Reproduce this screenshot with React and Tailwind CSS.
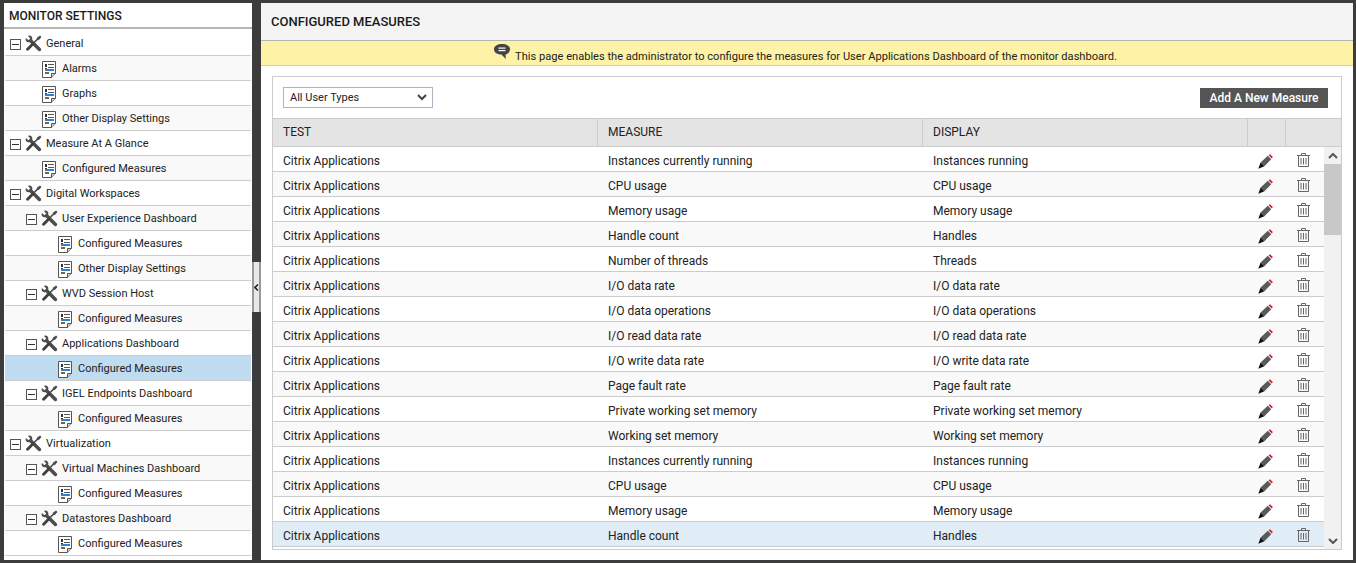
import React from 'react';

const tree = [
  ['General', 0, 'g'], ['Alarms', 1, 'd'], ['Graphs', 1, 'd'], ['Other Display Settings', 1, 'd'],
  ['Measure At A Glance', 0, 'g'], ['Configured Measures', 1, 'd'],
  ['Digital Workspaces', 0, 'g'], ['User Experience Dashboard', 1, 'g'], ['Configured Measures', 2, 'd'], ['Other Display Settings', 2, 'd'],
  ['WVD Session Host', 1, 'g'], ['Configured Measures', 2, 'd'],
  ['Applications Dashboard', 1, 'g'], ['Configured Measures', 2, 'd', true],
  ['IGEL Endpoints Dashboard', 1, 'g'], ['Configured Measures', 2, 'd'],
  ['Virtualization', 0, 'g'], ['Virtual Machines Dashboard', 1, 'g'], ['Configured Measures', 2, 'd'],
  ['Datastores Dashboard', 1, 'g'], ['Configured Measures', 2, 'd'],
];

const rows = [
  ['Instances currently running', 'Instances running'],
  ['CPU usage', 'CPU usage'],
  ['Memory usage', 'Memory usage'],
  ['Handle count', 'Handles'],
  ['Number of threads', 'Threads'],
  ['I/O data rate', 'I/O data rate'],
  ['I/O data operations', 'I/O data operations'],
  ['I/O read data rate', 'I/O read data rate'],
  ['I/O write data rate', 'I/O write data rate'],
  ['Page fault rate', 'Page fault rate'],
  ['Private working set memory', 'Private working set memory'],
  ['Working set memory', 'Working set memory'],
  ['Instances currently running', 'Instances running'],
  ['CPU usage', 'CPU usage'],
  ['Memory usage', 'Memory usage'],
  ['Handle count', 'Handles'],
];

const Tools = () => (
  <svg width="17" height="17" viewBox="0 0 18 18" className="shrink-0">
    {/* wrench, head top left */}
    <path d="M1 3.2 L3.6 5.6 L5.6 3.6 L3.2 1 C5.4 0 7.4 1 7.8 3.4 L7.6 5 L16.6 14 C17.4 15 17.2 16 16.6 16.6 C16 17.2 15 17.4 14 16.6 L5 7.6 L3.4 7.8 C1 7.4 0 5.4 1 3.2 Z" fill="#4d4d4d" />
    {/* screwdriver, handle bottom left */}
    <path d="M16 0.6 L17.4 2 L15 5 L13.6 5.2 L10 8.8 L8.8 7.6 L12.4 4 L12.8 2.6 Z" fill="#4d4d4d" />
    <path d="M8.2 7.4 L10.2 9.4 L4.4 15.6 C3.4 16.8 2.4 17 1.6 16.2 C0.8 15.4 1 14.4 2.2 13.4 Z" fill="#404040" />
  </svg>
);

const Doc = () => (
  <svg width="14" height="17" viewBox="0 0 14 17" className="shrink-0">
    <path d="M0.5 0.5 H13.5 V12.5 L9.5 16.5 H0.5 Z" fill="#fff" stroke="#555" />
    <path d="M13.5 12.5 H9.5 V16.5" fill="#ccc" stroke="#555" />
    <rect x="3" y="3" width="2" height="3" fill="#333" />
    <rect x="6" y="3" width="6" height="1" fill="#555" />
    <rect x="3" y="7" width="2" height="1" fill="#333" />
    <rect x="6" y="6" width="6" height="1" fill="#555" />
    <rect x="3" y="8" width="9" height="2" fill="#2f7fd6" />
    <rect x="3" y="11" width="4" height="2" fill="#7a6a2a" />
  </svg>
);

const Minus = () => (
  <span className="flex h-[11px] w-[11px] shrink-0 items-center justify-center border border-[#555] bg-white">
    <span className="h-px w-[7px] bg-[#333]" />
  </span>
);

const Pencil = () => (
  <svg width="15" height="15" viewBox="0 0 15 15">
    <path d="M2.6 8.4 L9.8 1.8 L13.2 5.2 L6.4 12.2 Z" fill="#5a5a5a" />
    <path d="M10.6 1.2 L12 0.2 L14.8 3 L13.8 4.4 Z" fill="#e01020" />
    <path d="M2.6 8.4 L6.4 12.2 L0.3 14.7 Z" fill="#111" />
  </svg>
);

const Trash = () => (
  <svg width="13" height="14" viewBox="0 0 13 14" fill="none" stroke="#666">
    <path d="M0 2.5 H13 M4.5 2.5 V0.5 H8.5 V2.5 M1.5 2.5 V13.5 H11.5 V2.5 M4 5 V11.5 M6.5 5 V11.5 M9 5 V11.5" />
  </svg>
);

const Bubble = () => (
  <svg width="16" height="16" viewBox="0 0 16 16" className="shrink-0">
    <path d="M8 0 C12.5 0 16 2 16 5.2 C16 8.2 13.5 10 11.5 10.4 L11.8 15 L7.5 10.6 C3.5 10.6 0 8.5 0 5.2 C0 2 3.5 0 8 0 Z" fill="#444" />
    <rect x="4.5" y="3.5" width="7" height="1.2" fill="#fff" />
    <rect x="4.5" y="6" width="7" height="1.2" fill="#fff" />
  </svg>
);

const indents = ['pl-[5px]', 'pl-[21px]', 'pl-[37px]'];

const App = () => {
  return (
    <div className="flex h-[563px] w-[1356px] overflow-hidden bg-[#3c3c3c] pt-[3px] pr-[3px] pb-[3px] pl-[4px] font-['Roboto',sans-serif] text-xs text-[#222]">
      <aside className="flex w-[248px] shrink-0 flex-col overflow-hidden bg-white">
        <div className="flex h-[26px] shrink-0 items-center border-b-2 border-[#b5b5b5] pt-px pl-[5px] text-xs font-medium text-[#1a1a1a]">MONITOR SETTINGS</div>
        <div className="mx-px mt-[2px]">
          {tree.map(([label, level, kind, active], i) => (
            <div
              key={i}
              className={`flex h-[25px] items-center border-b border-[#ccc] pt-[3px] text-[11px] ${indents[level]} ${active ? 'bg-[#c0dcf0]' : i % 2 ? 'bg-[#f9f9f9]' : 'bg-white'}`}
            >
              {kind === 'g' ? (
                <>
                  <Minus />
                  <span className="ml-[4px] -mt-[2px]"><Tools /></span>
                  <span className="ml-[4px]">{label}</span>
                </>
              ) : (
                <>
                  <span className="ml-[16px] -mt-[1px]"><Doc /></span>
                  <span className="ml-[6px]">{label}</span>
                </>
              )}
            </div>
          ))}
        </div>
      </aside>

      <div className="flex w-[9px] shrink-0 items-center">
        <div className="mt-[11px] flex h-[50px] w-[9px] items-center justify-center border-x-2 border-[#999] bg-[#e8e8e8]">
          <svg width="5" height="7" viewBox="0 0 5 7"><path d="M4 0.5 L1 3.5 L4 6.5" fill="none" stroke="#222" strokeWidth="1.6" /></svg>
        </div>
      </div>

      <main className="flex min-w-0 flex-1 flex-col bg-white">
        <div className="flex h-[38px] shrink-0 items-center border-b border-[#b5b5b5] bg-[#f4f4f4] pl-[10px] text-[13px] font-medium text-[#1a1a1a]">CONFIGURED MEASURES</div>
        <div className="flex h-[25px] shrink-0 items-center justify-center gap-[5px] border-b border-[#d8d0a0] bg-[#fdf2a6] pr-[3px] text-[11.1px]">
          <span className="-mt-[3px]"><Bubble /></span>
          <span className="mt-[9px]">This page enables the administrator to configure the measures for User Applications Dashboard of the monitor dashboard.</span>
        </div>

        <section className="mx-[11px] mt-[10px] flex w-[1070px] flex-col border border-[#ccc] bg-white">
          <div className="flex h-[41px] items-center justify-between pl-[10px] pr-[13px]">
            <div className="flex h-[21px] w-[150px] items-center justify-between border border-[#b0b4c0] pl-[6px] pr-[5px] text-[11px]">
              <span className="mt-[2px]">All User Types</span>
              <svg width="10" height="7" viewBox="0 0 10 7"><path d="M1 1 L5 5 L9 1" fill="none" stroke="#444" strokeWidth="2" /></svg>
            </div>
            <button className="flex h-[20px] w-[128px] items-center justify-center bg-[#555] text-xs font-medium text-white">Add A New Measure</button>
          </div>

          <div className="flex h-[29px] items-center border-y border-[#ccc] bg-[#e4e4e4]">
            <div className="flex h-full w-[325px] items-center border-r border-[#ccc] pb-px pl-[10px]">TEST</div>
            <div className="flex h-full w-[325px] items-center border-r border-[#ccc] pb-px pl-[10px]">MEASURE</div>
            <div className="flex h-full w-[325px] items-center border-r border-[#ccc] pb-px pl-[10px]">DISPLAY</div>
            <div className="h-full w-[38px] border-r border-[#ccc]" />
            <div className="h-full flex-1" />
          </div>

          <div className="flex h-[402px]">
            <div className="w-[1051px]">
              {rows.map((r, i) => (
                <div key={i} className={`flex h-[25px] items-center border-b border-[#ccc] pt-[4px] ${i === 15 ? 'bg-[#e0edf7]' : i % 2 ? 'bg-[#f9f9f9]' : 'bg-white'}`}>
                  <div className="w-[325px] pl-[10px]">Citrix Applications</div>
                  <div className="w-[325px] pl-[10px]">{r[0]}</div>
                  <div className="w-[325px] pl-[10px]">{r[1]}</div>
                  <div className="flex w-[38px] justify-center pr-[3px]"><Pencil /></div>
                  <div className="-mt-[2px] flex flex-1 justify-center pr-[3px]"><Trash /></div>
                </div>
              ))}
            </div>
            <div className="flex w-[17px] flex-col bg-[#f1f1f1]">
              <div className="flex h-[17px] items-center justify-center">
                <svg width="10" height="6" viewBox="0 0 10 6"><path d="M1 5 L5 1 L9 5" fill="none" stroke="#555" strokeWidth="2" /></svg>
              </div>
              <div className="h-[71px] bg-[#c8c8c8]" />
              <div className="flex-1" />
              <div className="flex h-[17px] items-center justify-center">
                <svg width="10" height="6" viewBox="0 0 10 6"><path d="M1 1 L5 5 L9 1" fill="none" stroke="#555" strokeWidth="2" /></svg>
              </div>
            </div>
          </div>
        </section>
      </main>
    </div>
  );
};

export default App;
